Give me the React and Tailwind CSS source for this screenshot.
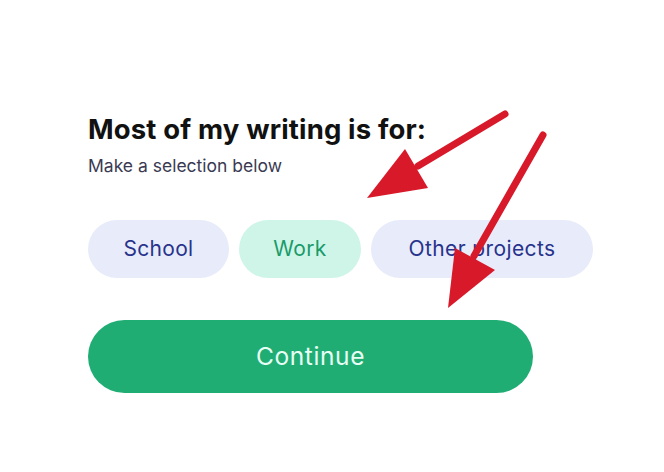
import React from "react";

export default function App() {
  return (
    <div className="relative w-[664px] h-[472px] bg-white overflow-hidden" style={{ fontFamily: "Inter, 'Noto Sans', sans-serif" }}>
      <div className="flex flex-col pl-[88px] pt-[113px]">
        <h1 className="text-[27.5px] leading-[32px] font-bold text-[#111111] tracking-[0.15px]">Most of my writing is for:</h1>
        <p className="mt-[10px] text-[17.5px] leading-[22px] text-[#3a3a52]">Make a selection below</p>
        <div className="flex gap-[10px] mt-[43px]">
          <button className="h-[58px] w-[141px] rounded-full bg-[#e8ebfa] text-[21px] text-[#27338c] flex items-center justify-center tracking-[0.3px]">School</button>
          <button className="h-[58px] w-[122px] rounded-full bg-[#cff5e9] text-[21px] text-[#1b9a6a] flex items-center justify-center tracking-[0.4px]">Work</button>
          <button className="h-[58px] w-[222px] rounded-full bg-[#e8ebfa] text-[21px] text-[#27338c] flex items-center justify-center tracking-[0.4px]">Other projects</button>
        </div>
        <button className="mt-[42px] h-[73px] w-[445px] rounded-full bg-[#20ad74] text-[24.5px] font-normal text-[#e8fff5] flex items-center justify-center tracking-[0.6px]">Continue</button>
      </div>
      <svg className="absolute inset-0 pointer-events-none" width="664" height="472" viewBox="0 0 664 472">
        <line x1="505" y1="114" x2="418" y2="166" stroke="#d8192a" strokeWidth="7" strokeLinecap="round" />
        <polygon points="367,198 405,149 428,188" fill="#d8192a" />
        <line x1="543" y1="135" x2="474" y2="256" stroke="#d8192a" strokeWidth="7" strokeLinecap="round" />
        <polygon points="448,308 455,248 495,270" fill="#d8192a" />
      </svg>
    </div>
  );
}
